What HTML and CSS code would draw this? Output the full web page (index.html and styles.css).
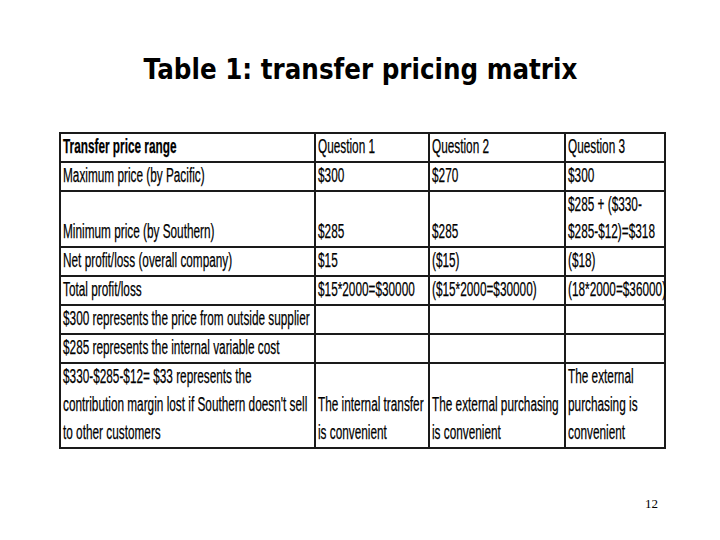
FILE: index.html
```html
<!DOCTYPE html>
<html>
<head>
<meta charset="utf-8">
<link rel="stylesheet" href="styles.css">
</head>
<body>
<div class="slide">
  <div class="title-wrap"><h1 class="title">Table 1: transfer pricing matrix</h1></div>
  <table class="matrix">
    <colgroup>
      <col class="c0"><col class="c1"><col class="c2"><col class="c3">
    </colgroup>
    <tr>
      <td><span class="t b">Transfer price range</span></td>
      <td><span class="t">Question 1</span></td>
      <td><span class="t">Question 2</span></td>
      <td><span class="t">Question 3</span></td>
    </tr>
    <tr>
      <td><span class="t">Maximum price (by Pacific)</span></td>
      <td><span class="t">$300</span></td>
      <td><span class="t">$270</span></td>
      <td><span class="t">$300</span></td>
    </tr>
    <tr>
      <td><span class="t">Minimum price (by Southern)</span></td>
      <td><span class="t">$285</span></td>
      <td><span class="t">$285</span></td>
      <td><span class="t">$285 + ($330-<br>$285-$12)=$318</span></td>
    </tr>
    <tr>
      <td><span class="t">Net profit/loss (overall company)</span></td>
      <td><span class="t">$15</span></td>
      <td><span class="t">($15)</span></td>
      <td><span class="t">($18)</span></td>
    </tr>
    <tr>
      <td><span class="t">Total profit/loss</span></td>
      <td><span class="t">$15*2000=$30000</span></td>
      <td><span class="t">($15*2000=$30000)</span></td>
      <td><span class="t">(18*2000=$36000)</span></td>
    </tr>
    <tr>
      <td><span class="t">$300 represents the price from outside supplier</span></td>
      <td></td><td></td><td></td>
    </tr>
    <tr>
      <td><span class="t">$285 represents the internal variable cost</span></td>
      <td></td><td></td><td></td>
    </tr>
    <tr class="last">
      <td><span class="t">$330-$285-$12= $33 represents the<br>contribution margin lost if Southern doesn't sell<br>to other customers</span></td>
      <td><span class="t">The internal transfer<br>is convenient</span></td>
      <td><span class="t">The external purchasing<br>is convenient</span></td>
      <td><span class="t">The external<br>purchasing is<br>convenient</span></td>
    </tr>
  </table>
  <div class="footer"><span class="page">12</span></div>
</div>
</body>
</html>
```
FILE: styles.css
```css
html, body {
  margin: 0;
  padding: 0;
  background: #ffffff;
}
.slide {
  width: 720px;
  height: 540px;
  display: flex;
  flex-direction: column;
  box-sizing: border-box;
  padding-top: 54px;
}
.title-wrap {
  display: flex;
  justify-content: center;
  height: 32px;
}
.title {
  margin: 0;
  font-family: "DejaVu Sans", Verdana, sans-serif;
  font-weight: bold;
  font-size: 28px;
  line-height: 32px;
  color: #000;
  white-space: nowrap;
  transform: scaleX(0.88);
  transform-origin: center;
}
.matrix {
  margin-top: 46px;
  margin-left: 59px;
  border-collapse: collapse;
  table-layout: fixed;
  width: 607px;
}
.c0 { width: 255px; }
.c1 { width: 114px; }
.c2 { width: 136px; }
.c3 { width: 100px; }
.matrix td {
  border: 2px solid #1a1a1a;
  padding: 0 0 0 2px;
  height: 27px;
  vertical-align: bottom;
  overflow: visible;
  font-family: "Liberation Sans", Arial, sans-serif;
  font-size: 20px;
  line-height: 27px;
  color: #000;
}
.matrix .last td {
  line-height: 27.8px;
}
.t {
  display: inline-block;
  vertical-align: top;
  white-space: nowrap;
  transform: translateY(-1px) scaleX(0.59);
  transform-origin: 0 0;
  -webkit-text-stroke: 0.25px #000;
}
.b {
  font-weight: bold;
}
.footer {
  margin-top: 47px;
  display: flex;
  justify-content: flex-end;
  padding-right: 62px;
}
.page {
  font-family: "Liberation Serif", "Times New Roman", serif;
  font-size: 13px;
  line-height: 16px;
  color: #000;
}
```
